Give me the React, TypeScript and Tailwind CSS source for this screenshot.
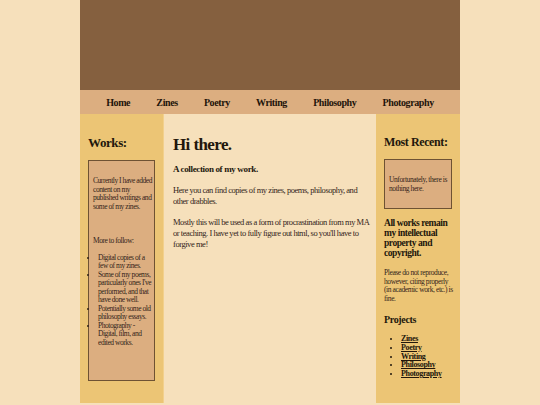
import React from 'react';

const navItems = ['Home', 'Zines', 'Poetry', 'Writing', 'Philosophy', 'Photography'];
const projects = ['Zines', 'Poetry', 'Writing', 'Philosophy', 'Photography'];

const serif = { fontFamily: '"Liberation Serif", "DejaVu Serif", serif' };

export default function App() {
  return (
    <div className="min-h-[405px] bg-[#f6e0bb] text-[#22170c]" style={serif}>
      <div className="mx-auto w-[380px]">
        {/* Banner */}
        <div className="h-[90px] bg-[#85603f]" />

        {/* Nav */}
        <nav className="flex h-[24px] items-center justify-evenly bg-[#dcae80] text-[10px] font-bold tracking-[-0.4px]">
          {navItems.map((item) => (
            <a key={item} className="text-[#1e140a]">
              {item}
            </a>
          ))}
        </nav>

        <div className="flex">
          {/* Left sidebar */}
          <aside className="w-[84px] border-r border-[#f2d08c] bg-[#ecc575] px-2 pb-[17px] pt-[22px]">
            <h2 className="text-[13px] font-bold leading-none tracking-[-0.4px]">Works:</h2>
            <div className="mt-[11px] h-[221px] border border-[#6e5233] bg-[#dcae80] pl-[4px] pr-[1px] pt-[16px] text-[7.5px] leading-[8.5px] tracking-[-0.45px] text-[#33241a]">
              <p>Currently I have added content on my published writings and some of my zines.</p>
              <p className="mt-[26px]">More to follow:</p>
              <ul className="mt-[8px] list-disc pl-[5px]">
                <li>Digital copies of a few of my zines.</li>
                <li>Some of my poems, particularly ones I've performed, and that have done well.</li>
                <li>Potentially some old philosophy essays.</li>
                <li>Photography - Digital, film, and edited works.</li>
              </ul>
            </div>
          </aside>

          {/* Main */}
          <main className="w-[212px] pl-[9px] pr-[3px] pt-[22px]">
            <h1 className="text-[17px] font-bold leading-none tracking-[-0.6px]">Hi there.</h1>
            <p className="mt-[10px] text-[9px] font-bold tracking-[-0.35px]">A collection of my work.</p>
            <p className="mt-[8px] text-[8.5px] leading-[11px] tracking-[-0.45px] text-[#33241a]">
              Here you can find copies of my zines, poems, philosophy, and other drabbles.
            </p>
            <p className="mt-[10px] text-[8.5px] leading-[11px] tracking-[-0.45px] text-[#33241a]">
              Mostly this will be used as a form of procrastination from my MA or teaching. I have yet to fully figure out html, so you'll have to forgive me!
            </p>
          </main>

          {/* Right sidebar */}
          <aside className="w-[84px] bg-[#ecc575] pl-2 pr-[4px] pb-[24px] pt-[22px]">
            <h2 className="text-[12px] font-bold leading-none tracking-[-0.4px]">Most Recent:</h2>
            <div className="mr-[4px] mt-[11px] h-[50px] border border-[#6e5233] bg-[#dcae80] px-[4px] pt-[16px] text-[7.5px] leading-[8.5px] tracking-[-0.4px] text-[#33241a]">
              <p>Unfortunately, there is nothing here.</p>
            </div>
            <p className="mt-[9px] text-[9.5px] font-bold leading-[10px] tracking-[-0.45px]">
              All works remain my intellectual property and copyright.
            </p>
            <p className="mt-[11px] text-[7.5px] leading-[8.5px] tracking-[-0.4px] text-[#33241a]">
              Please do not reproduce, however, citing properly (in academic work, etc.) is fine.
            </p>
            <h3 className="mt-[12px] text-[10px] font-bold leading-none tracking-[-0.35px]">Projects</h3>
            <ul className="mt-[10px] list-disc pl-[17px] text-[8px] font-bold leading-[8.8px] tracking-[-0.35px]">
              {projects.map((p) => (
                <li key={p}>
                  <a className="underline">{p}</a>
                </li>
              ))}
            </ul>
          </aside>
        </div>
      </div>
    </div>
  );
}
